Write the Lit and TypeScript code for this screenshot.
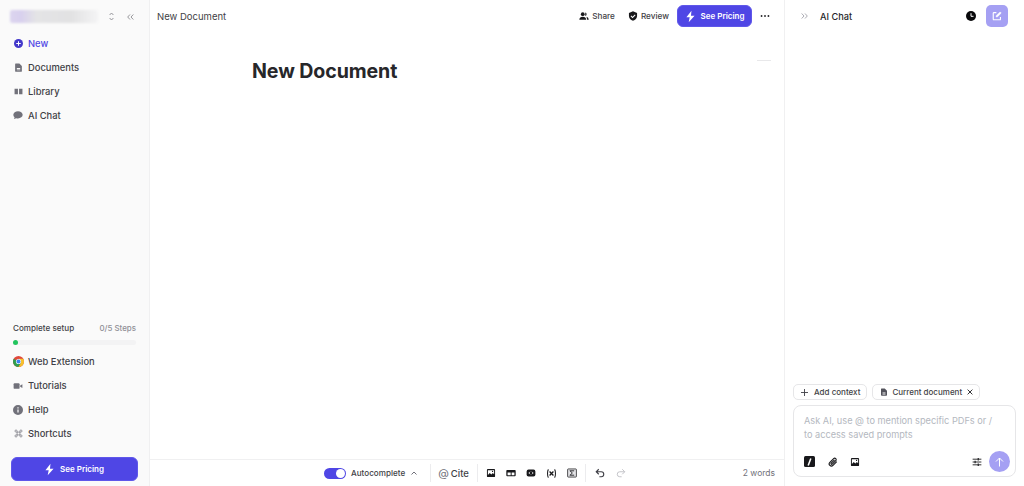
import { LitElement, html, css, svg } from "lit";
import { customElement } from "lit/decorators.js";

const bolt = svg`<path d="M9.2 1 3 9h4l-1.2 6L13 7H8.600z" fill="#fff"/>`;
const ic = (body: unknown, size = 12, vb = 16) =>
  html`<svg width=${size} height=${size} viewBox="0 0 ${vb} ${vb}">${body}</svg>`;

const docPath = svg`<path fill-rule="evenodd" d="M3 1h6.500L14 5.500V14a1.500 1.500 0 0 1-1.500 1.500h-9A1.500 1.500 0 0 1 2 14V2.500A1.500 1.500 0 0 1 3 1zm2 8v1.500h6V9zm0 2.600v1.200h6v-1.200z" fill="currentColor"/>`;

@customElement("app-root")
export class AppRoot extends LitElement {
  static styles = css`
    :host { display: block; width: 1024px; height: 486px; overflow: hidden; font-family: Inter, "Liberation Sans", sans-serif; color: #27272a; background: #fff; }
    * { box-sizing: border-box; }
    svg { display: block; flex: none; }
    .app { display: grid; grid-template-columns: 150px 634px 240px; height: 486px; }

    .side { background: #fafafa; border-right: 1px solid #f0f0f1; display: flex; flex-direction: column; padding: 0 11px 5px; }
    .acct { display: flex; align-items: center; height: 13px; margin-top: 10px; }
    .blur { width: 88px; height: 13px; margin-left: -1px; border-radius: 2px; background: linear-gradient(90deg, #dcd5ef 0, #d8d0ee 12%, #e4e4e6 30%, #e2e2e3 70%, #f4f4f5 100%); filter: blur(1px); }
    .updown { margin-left: 11px; color: #8b8b90; }
    .coll { margin-left: 13px; color: #8b8b90; }
    .nav { display: flex; flex-direction: column; margin-top: 9px; }
    .nav.low { margin-top: 0; }
    .item { display: flex; align-items: center; gap: 5px; height: 24px; padding-left: 2px; font-size: 9.400px; font-weight: 500; color: #3f3f46; white-space: nowrap; }
    .item .ico { width: 10px; display: flex; justify-content: center; color: #71717a; flex: none; }
    .item.new { color: #4f46e5; height: 23px; }
    .item.new .ico { color: #4338ca; }
    .spacer { flex: 1; }
    .setup { display: flex; justify-content: space-between; padding: 0 2px; font-size: 8.100px; font-weight: 500; color: #3f3f46; line-height: 12px; }
    .setup span:last-child { color: #8f8f96; font-size: 7.900px; }
    .track { height: 5px; border-radius: 3px; background: #f3f3f4; margin: 6px 2px 4.500px; }
    .dot { width: 5px; height: 5px; border-radius: 50%; background: #22c55e; }
    .pricing { display: flex; align-items: center; justify-content: center; gap: 4px; background: #4f46e5; color: #fff; border: 1px solid #5f57ea; border-radius: 6px; font-size: 8px; font-weight: 600; }
    .side .pricing { height: 24px; margin: 11.500px 0 0; padding-right: 2px; }

    .main { display: flex; flex-direction: column; min-width: 0; }
    .top { display: flex; align-items: center; height: 32px; padding: 0 14px 0 7px; flex: none; }
    .title { font-size: 9.500px; color: #3f3f46; flex: 1; }
    .act { display: flex; align-items: center; gap: 3px; font-size: 8.200px; font-weight: 500; color: #3f3f46; }
    .act.share { margin-right: 13px; }
    .act.review { margin-right: 8px; }
    .top .pricing { width: 75px; height: 22px; margin-right: 8px; padding-right: 1px; }
    .body { flex: 1; position: relative; padding: 27px 0 0 102px; }
    h1 { margin: 0; font-size: 19.600px; line-height: 24px; font-weight: 700; color: #27272a; letter-spacing: -0.1px; }
    .tick { position: absolute; right: 13px; top: 28px; width: 14px; height: 1px; background: #e8e8ea; }
    .bot { height: 27px; flex: none; border-top: 1px solid #f0f0f1; display: flex; align-items: center; padding: 0 9px 0 174px; color: #27272a; }
    .switch { width: 22px; height: 11px; border-radius: 6px; background: #4f46e5; display: flex; justify-content: flex-end; align-items: center; padding-right: 1px; }
    .switch i { width: 9px; height: 9px; border-radius: 50%; background: #fff; display: block; }
    .auto { font-size: 8.100px; font-weight: 500; color: #3f3f46; margin: 0 6px 0 5px; }
    .chev { margin-right: 13px; }
    .sep { width: 1px; height: 18px; background: #ececee; }
    .cite { display: flex; align-items: center; gap: 2px; font-size: 9.500px; font-weight: 500; color: #3f3f46; margin: 0 8px 0 7px; }
    .cite b { font-weight: 400; font-size: 11px; color: #71717a; }
    .tools { display: flex; align-items: center; gap: 10px; margin: 0 8px; }
    .undo { margin-left: 9px; }
    .redo { margin-left: 11px; }
    .words { margin-left: auto; font-size: 8.500px; color: #71717a; }

    .chat { border-left: 1px solid #f0f0f1; display: flex; flex-direction: column; padding: 0 8px 9px; }
    .ctop { display: flex; align-items: center; height: 32px; flex: none; }
    .ctop .exp { margin: 0 12px 0 8px; color: #a1a1aa; }
    .ctop span { font-size: 9.200px; font-weight: 500; flex: 1; }
    .hist { margin-right: 10px; }
    .newbtn { width: 22px; height: 22px; border-radius: 5px; background: #a5a0f3; display: flex; align-items: center; justify-content: center; margin-right: 8px; }
    .chips { display: flex; gap: 5px; margin-top: auto; }
    .chip { display: flex; align-items: center; height: 16px; border: 1px solid #e6e6e8; border-radius: 5px; font-size: 8px; font-weight: 500; color: #3f3f46; gap: 4px; padding: 0 6px; white-space: nowrap; }
    .chip.add { padding: 0 5.500px 0 6px; }
    .chip.cur { padding: 0 6px 0 7.500px; }
    .chip .plus { margin: 0 2px 0 1px; }
    .chip .doc { color: #52525b; }
    .chip .x { margin-left: 1px; }
    .box { margin-top: 5px; height: 72px; border: 1px solid #e6e6e8; border-radius: 8px; padding: 8px 5px 4px 10px; display: flex; flex-direction: column; }
    .ph { font-size: 9.200px; line-height: 13.700px; color: #b4b8c0; white-space: nowrap; }
    .row { display: flex; align-items: center; margin-top: auto; }
    .slash { width: 11px; height: 11px; background: #18181b; border-radius: 1.500px; margin-right: 13px; display:flex; align-items:center; justify-content:center; }
    .row .clip { margin-right: 12px; }
    .row .tune { margin-left: auto; margin-right: 7px; }
    .send { width: 21px; height: 21px; border-radius: 50%; background: #a5a0f3; display: flex; align-items: center; justify-content: center; }
  `;

  render() {
    const picture = ic(svg`<path fill-rule="evenodd" d="M3 1.500h10A1.500 1.500 0 0 1 14.500 3v10a1.500 1.500 0 0 1-1.500 1.500H3A1.500 1.500 0 0 1 1.500 13V3A1.500 1.500 0 0 1 3 1.500zM3 3.500V11l3-3 2.500 2.500L11 8l2 2V3.500zm7.500 1a1 1 0 1 1 0 2 1 1 0 0 1 0-2z" fill="#18181b"/>`, 10);
    return html`
      <div class="app">
        <aside class="side">
          <div class="acct">
            <div class="blur"></div>
            <svg class="updown" width="5" height="9" viewBox="0 0 5 9" fill="none" stroke="currentColor" stroke-width="0.900"><path d="M.6 3 2.500 1 4.400 3M.6 6 2.500 8 4.400 6"/></svg>
            <svg class="coll" width="7" height="6" viewBox="0 0 7 6" fill="none" stroke="currentColor" stroke-width="0.900"><path d="M3 .5.700 3 3 5.500M6.300.5 4 3l2.300 2.500"/></svg>
          </div>
          <nav class="nav">
            <div class="item new"><span class="ico">${ic(svg`<circle cx="8" cy="8" r="8" fill="currentColor"/><path d="M8 4v8M4 8h8" stroke="#fff" stroke-width="1.800"/>`, 9)}</span>New</div>
            <div class="item"><span class="ico">${ic(docPath, 9)}</span>Documents</div>
            <div class="item"><span class="ico">${ic(svg`<path d="M1 3h6v10H1zM9 3h6v10H9z" fill="currentColor"/>`, 9)}</span>Library</div>
            <div class="item"><span class="ico">${ic(svg`<path d="M8 2c4 0 7.500 2.400 7.500 5.700S12 13.400 8 13.400c-1 0-2-.1-2.800-.4L1.500 14.500l1-2.800C1.200 10.700.5 9.300.5 7.700.5 4.400 4 2 8 2z" fill="currentColor"/>`, 10)}</span>AI Chat</div>
          </nav>
          <div class="spacer"></div>
          <div class="setup"><span>Complete setup</span><span>0/5 Steps</span></div>
          <div class="track"><div class="dot"></div></div>
          <div class="nav low">
            <div class="item"><span class="ico">${ic(svg`<circle cx="8" cy="8" r="8" fill="#e0483c"/><path d="M8 8 1.100 4A8 8 0 0 0 8 16l3.500-6z" fill="#2f9e4f"/><path d="M8 16a8 8 0 0 0 6.900-12H8l3.500 6z" fill="#f6c12b"/><circle cx="8" cy="8" r="3.700" fill="#fff"/><circle cx="8" cy="8" r="2.900" fill="#3b82f0"/>`, 11)}</span>Web Extension</div>
            <div class="item"><span class="ico">${ic(svg`<rect x="1" y="3.500" width="9.500" height="9" rx="1.500" fill="currentColor"/><path d="m11.500 7 3.500-2v6l-3.500-2z" fill="currentColor"/>`, 10)}</span>Tutorials</div>
            <div class="item"><span class="ico">${ic(svg`<path fill-rule="evenodd" d="M8 0a8 8 0 1 1 0 16A8 8 0 0 1 8 0zM7 7v5h2V7zm0-3.300v2h2v-2z" fill="currentColor"/>`, 10)}</span>Help</div>
            <div class="item"><span class="ico">${ic(svg`<path d="M5.500 5.500h5v5h-5zM5.500 5.500H3.800A1.900 1.900 0 1 1 5.500 3.700zM10.500 5.500V3.700a1.900 1.900 0 1 1 1.800 1.800zM10.500 10.500h1.800a1.900 1.900 0 1 1-1.800 1.800zM5.500 10.500v1.800a1.900 1.900 0 1 1-1.800-1.800z" fill="none" stroke="currentColor" stroke-width="1.200"/>`, 9)}</span>Shortcuts</div>
          </div>
          <div class="pricing">${ic(bolt, 13)}See Pricing</div>
        </aside>

        <main class="main">
          <div class="top">
            <div class="title">New Document</div>
            <div class="act share">${ic(svg`<circle cx="6" cy="5" r="3" fill="#18181b"/><path d="M.5 14c0-3 2.400-5 5.500-5s5.500 2 5.500 5z" fill="#18181b"/><path d="M10 2.200a2.900 2.900 0 0 1 0 5.600M12 9.200c2 .5 3.500 2.300 3.500 4.800H13" fill="#18181b"/>`, 10)}Share</div>
            <div class="act review">${ic(svg`<path fill-rule="evenodd" d="M8 .5 14.500 3v5c0 3.700-2.600 6.300-6.500 7.500C4.100 14.300 1.500 11.700 1.500 8V3zM11 5.500 7.200 9.300 5.200 7.300 4.100 8.400l3.100 3.100 4.900-4.900z" fill="#18181b"/>`, 10)}Review</div>
            <div class="pricing">${ic(bolt, 13)}See Pricing</div>
            ${ic(svg`<circle cx="2.500" cy="8" r="1.500" fill="#27272a"/><circle cx="8" cy="8" r="1.500" fill="#27272a"/><circle cx="13.500" cy="8" r="1.500" fill="#27272a"/>`, 10)}
          </div>
          <div class="body">
            <h1>New Document</h1>
            <div class="tick"></div>
          </div>
          <div class="bot">
            <div class="switch"><i></i></div>
            <span class="auto">Autocomplete</span>
            <svg class="chev" width="6" height="4" viewBox="0 0 6 4" fill="none" stroke="#71717a" stroke-width="1"><path d="m.5 3.500 2.500-2.500 2.500 2.500"/></svg>
            <div class="sep"></div>
            <div class="cite"><b>@</b>Cite</div>
            <div class="sep"></div>
            <div class="tools">
              ${picture}
              ${ic(svg`<path fill-rule="evenodd" d="M2 3h12a1.500 1.500 0 0 1 1.500 1.500v7A1.500 1.500 0 0 1 14 13H2a1.500 1.500 0 0 1-1.500-1.500v-7A1.500 1.500 0 0 1 2 3zm.5 4v4.500h5V7zm6.500 0v4.500h4.500V7z" fill="#18181b"/>`, 10)}
              ${ic(svg`<rect x="1" y="2.500" width="14" height="11" rx="3" fill="#18181b"/><path d="M6.500 6 4.500 8l2 2M9.500 6l2 2-2 2" stroke="#fff" stroke-width="1.300" fill="none"/>`, 10)}
              ${ic(svg`<path d="M3.500 2C1.800 4.500 1.800 11.500 3.500 14M12.500 2c1.700 2.500 1.700 9.500 0 12" stroke="#18181b" stroke-width="1.500" fill="none"/><path d="m5.200 5.200 5.600 5.600M10.800 5.200l-5.600 5.600" stroke="#18181b" stroke-width="1.900" fill="none"/>`, 11)}
              ${ic(svg`<rect x="1" y="1.500" width="14" height="13" rx="1" fill="#e4e4e7" stroke="#27272a" stroke-width="1.300"/><path d="M4.500 4.500h7M4.500 11.500h7M5 4.500 8.500 8 5 11.500" stroke="#18181b" stroke-width="1.400" fill="none"/>`, 10)}
            </div>
            <div class="sep"></div>
            <svg class="undo" width="10" height="10" viewBox="0 0 16 16" fill="none" stroke="#3f3f46" stroke-width="1.800"><path d="M6 2 2 6l4 4M2 6h8a4 4 0 0 1 0 8H7"/></svg>
            <svg class="redo" width="10" height="10" viewBox="0 0 16 16" fill="none" stroke="#c4c4c9" stroke-width="1.600"><path d="m10 2 4 4-4 4M14 6H6a4 4 0 0 0 0 8h3"/></svg>
            <span class="words">2 words</span>
          </div>
        </main>

        <section class="chat">
          <div class="ctop">
            <svg class="exp" width="7" height="6" viewBox="0 0 7 6" fill="none" stroke="currentColor" stroke-width="0.900"><path d="M.7.5 3 3 .7 5.500M4 .5 6.300 3 4 5.500"/></svg>
            <span>AI Chat</span>
            <svg class="hist" width="10" height="10" viewBox="0 0 16 16"><circle cx="8" cy="8" r="8" fill="#09090b"/><path d="M8 3.500V8.500h4" stroke="#fff" stroke-width="1.600" fill="none"/></svg>
            <div class="newbtn"><svg width="10" height="10" viewBox="0 0 16 16" fill="none" stroke="#fff" stroke-width="1.800"><path d="M13.500 9.500V13a1 1 0 0 1-1 1H3a1 1 0 0 1-1-1V3.500a1 1 0 0 1 1-1h4"/><path d="M6.500 9.500 7 7l6-5.500 1.800 1.800L9 9z" fill="#fff" stroke-width="0.800"/></svg></div>
          </div>
          <div class="chips">
            <div class="chip add">
              <svg class="plus" width="7" height="7" viewBox="0 0 7 7" stroke="#3f3f46" stroke-width="0.900"><path d="M3.500 0v7M0 3.500h7"/></svg>
              Add context
            </div>
            <div class="chip cur">
              <span class="doc">${ic(docPath, 8)}</span>
              Current document
              <svg class="x" width="6" height="6" viewBox="0 0 7 7" stroke="#27272a" stroke-width="1.100"><path d="m.7.7 5.600 5.600M6.300.7.7 6.300"/></svg>
            </div>
          </div>
          <div class="box">
            <div class="ph">Ask AI, use @ to mention specific PDFs or /<br />to access saved prompts</div>
            <div class="row">
              <div class="slash"><svg width="7" height="8" viewBox="0 0 7 8" stroke="#fff" stroke-width="1.500"><path d="M4.800.5 2.200 7.500"/></svg></div>
              <svg class="clip" width="10" height="10" viewBox="0 0 16 16" fill="none" stroke="#18181b" stroke-width="1.800"><path d="M14 7.500 8 13.500a3.500 3.500 0 0 1-5-5l6-6a2.400 2.400 0 0 1 3.400 3.400L6.800 11.500a1.200 1.200 0 0 1-1.700-1.700L10.500 4.500"/></svg>
              ${picture}
              <svg class="tune" width="10" height="10" viewBox="0 0 16 16" stroke="#27272a" stroke-width="1.500"><path d="M1 3.500h14M1 8h14M1 12.500h14"/><path d="M10 1.500v4M5 6v4M10 10.500v4" stroke-width="2"/></svg>
              <div class="send"><svg width="9" height="10" viewBox="0 0 9 10" fill="none" stroke="#fff" stroke-width="1"><path d="M4.500 9.500V1M1 4.500l3.500-3.500L8 4.500"/></svg></div>
            </div>
          </div>
        </section>
      </div>
    `;
  }
}
